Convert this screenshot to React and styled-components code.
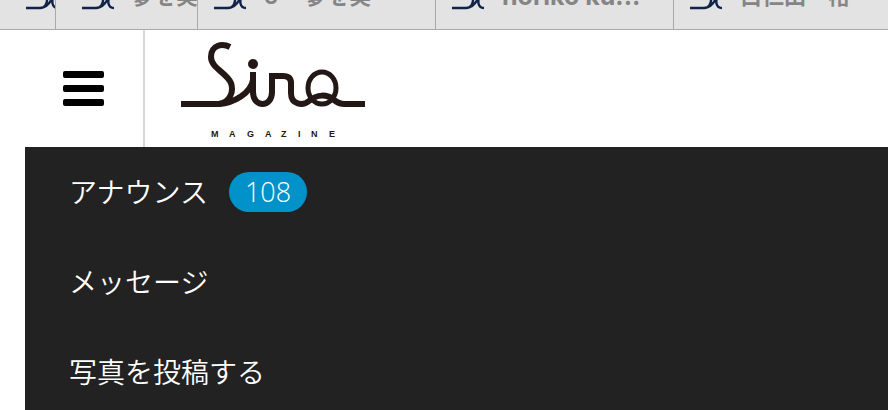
import styled, { createGlobalStyle } from "styled-components";

const GlobalStyle = createGlobalStyle`
  * {
    box-sizing: border-box;
  }
  body {
    margin: 0;
    background: #fff;
    font-family: "Open Sans", "Noto Sans CJK JP", sans-serif;
  }
`

const TabBar = styled.nav`
  display: flex;
  align-items: flex-end;
  height: 30px;
  overflow: hidden;
  background: #e3e3e3;
  border-bottom: 1px solid #a9a9a9;
`

const Tab = styled.a`
  flex: 0 0 ${({ $width }) => $width}px;
  display: flex;
  align-items: center;
  gap: 18px;
  height: 67px;
  padding-left: ${({ $inset }) => $inset || 16}px;
  overflow: hidden;
  border-right: 1px solid #a9a9a9;
  color: #858585;
  font-family: Inter, "Noto Sans CJK JP", sans-serif;
  font-size: ${({ $latin }) => ($latin ? 25 : 22)}px;
  font-weight: 700;
  line-height: 32px;
  text-decoration: none;
  white-space: pre;

  &:last-child {
    flex: 1 0 0;
    border-right: 0;
  }
`

const TabIcon = styled.svg`
  flex: none;
  width: 32px;
  height: 32px;
`

const Header = styled.header`
  display: flex;
  height: 117px;
`

const MenuButton = styled.button`
  width: 145px;
  padding: 0 0 0 63px;
  border: 0;
  border-right: 2px solid #d8d8d8;
  background: none;
  text-align: left;
`

const Bars = styled.svg`
  display: block;
  width: 42px;
  height: 36px;
`

const Brand = styled.a`
  padding: 12px 0 0 35px;
`

const Logo = styled.svg`
  display: block;
  width: 186px;
  height: 98px;
`

const Menu = styled.ul`
  margin: 0 0 0 25px;
  padding: 0;
  list-style: none;
  background: #222;
`

const MenuItem = styled.li`
  border-bottom: 1px solid ${({ $ruled }) => ($ruled ? "#1c1519" : "transparent")};
`

const MenuLink = styled.a`
  display: flex;
  align-items: center;
  gap: 21px;
  height: 89px;
  padding-left: 44px;
  color: #fff;
  font-size: 28px;
  font-weight: 350;
  line-height: 40px;
  text-decoration: none;
`

const Badge = styled.span`
  padding: 0 16px;
  border-radius: 20px;
  background: #0092c8;
  font-size: 27px;
  font-weight: 300;
`

const tabs = [
  { title: "", width: 56, inset: 26 },
  { title: "夢を実現", width: 142, inset: 26 },
  { title: "5　 夢を実", width: 238 },
  { title: "noriko ku...", width: 238, latin: true },
  { title: "白仁田　裕", width: 238 },
]

const items = [
  { label: "アナウンス", count: 108 },
  { label: "メッセージ" },
  { label: "写真を投稿する", ruled: true },
]

const App = () => {
  return (
    <>
      <GlobalStyle />
      <TabBar>
        {tabs.map((tab, i) => (
          <Tab key={i} href="#" $width={tab.width} $inset={tab.inset} $latin={tab.latin}>
            <TabIcon viewBox="0 0 32 32" fill="none" stroke="#10234a" strokeWidth="2.4">
              <path d="M0 28H14C19 28 22 24 21 14M14 28C21 28 25 22 28 14M28 14C25 22 26 28 32 28" />
            </TabIcon>
            {tab.title}
          </Tab>
        ))}
      </TabBar>
      <Header>
        <MenuButton aria-label="Menu">
          <Bars viewBox="0 0 42 36">
            <rect y="0" width="41" height="7" rx="2" />
            <rect y="14" width="41" height="7" rx="2" />
            <rect y="28" width="41" height="7" rx="2" />
          </Bars>
        </MenuButton>
        <Brand href="#" aria-label="Sirq Magazine">
          <Logo viewBox="180 42 186 98">
            <g fill="none" stroke="#231815" strokeWidth="6">
              <path d="M181 104H219C230 102 234 92 231 83C227 73 211 68 211 57C211 45 222 43 230 47" />
              <path d="M219 104C234 103 251 93 253 80M253 72V92C253 108 272 108 272 92V76H283Q291 76 291 83V93C291 105 303 106 309 101C317 94 327 94 334 100C338 103 340 104 344 104H365" />
              <ellipse cx="322" cy="88" rx="14" ry="16" strokeWidth="5" />
            </g>
            <circle cx="253" cy="64" r="5" fill="#231815" />
            <text
              y="137"
              x="211 229 247 265 281 298 311 329"
              fill="#231815"
              fontFamily="Liberation Sans, sans-serif"
              fontSize="9"
              fontWeight="700"
            >
              MAGAZINE
            </text>
          </Logo>
        </Brand>
      </Header>
      <Menu>
        {items.map((item) => (
          <MenuItem key={item.label} $ruled={item.ruled}>
            <MenuLink href="#">
              {item.label}
              {item.count && <Badge>{item.count}</Badge>}
            </MenuLink>
          </MenuItem>
        ))}
      </Menu>
    </>
  )
}

export default App;
